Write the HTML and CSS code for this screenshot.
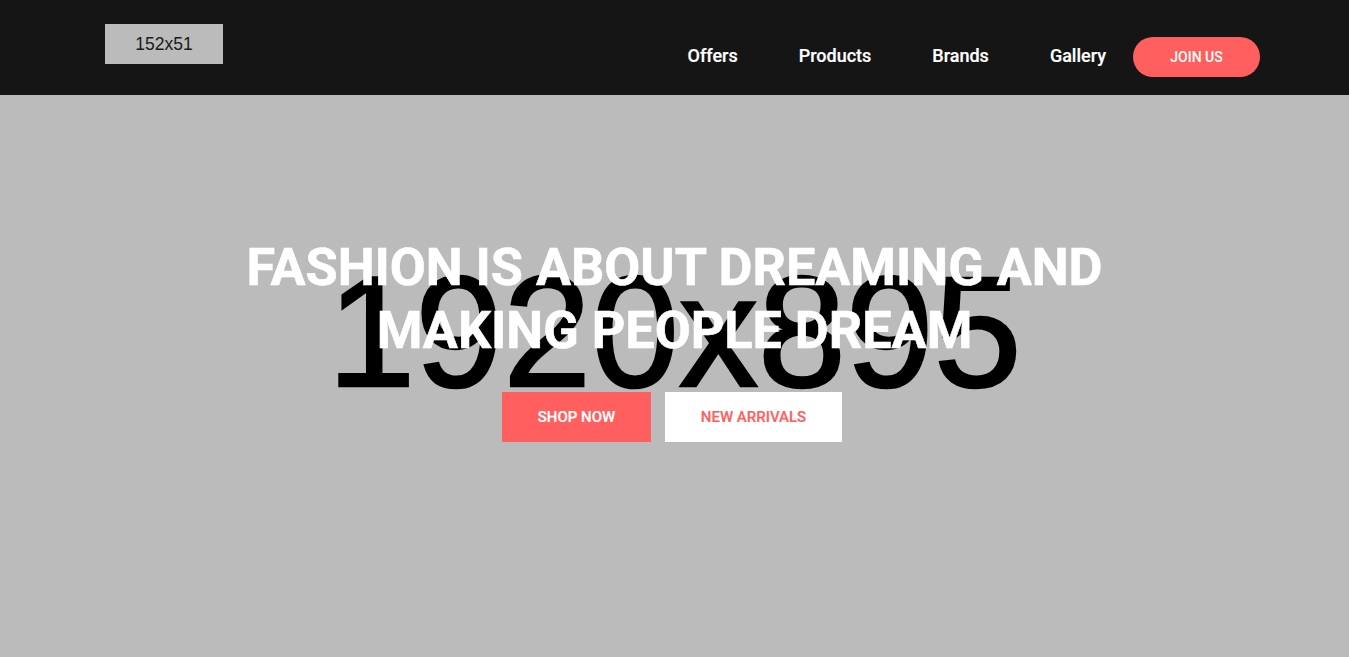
FILE: index.html
```html
<!DOCTYPE html>
<html lang="en">
<head>
<meta charset="utf-8">
<title>Fashion</title>
<link rel="stylesheet" href="styles.css">
</head>
<body>
<header class="site-header">
  <a class="logo" href="#">152x51</a>
  <nav class="main-nav">
    <a class="nav-link" href="#">Offers</a>
    <a class="nav-link" href="#">Products</a>
    <a class="nav-link" href="#">Brands</a>
    <a class="nav-link" href="#">Gallery</a>
    <a class="join-btn" href="#">JOIN US</a>
  </nav>
</header>
<section class="hero">
  <div class="hero-bg" aria-hidden="true">1920x895</div>
  <div class="hero-content">
    <h1 class="hero-title">FASHION IS ABOUT DREAMING AND<br>MAKING PEOPLE DREAM</h1>
    <div class="hero-actions">
      <a class="btn btn-primary" href="#">SHOP NOW</a>
      <a class="btn btn-light" href="#">NEW ARRIVALS</a>
    </div>
  </div>
</section>
</body>
</html>
```
FILE: styles.css
```css
* { box-sizing: border-box; }
html, body { margin: 0; padding: 0; }
body {
  font-family: Roboto, "Liberation Sans", Arial, sans-serif;
  background: #bbbbbb;
  overflow: hidden;
}
a { text-decoration: none; }

.site-header {
  height: 95px;
  background: #151515;
  display: flex;
  align-items: flex-start;
  justify-content: space-between;
  padding: 0 89px 0 105px;
}
.logo {
  margin-top: 24px;
  width: 118px;
  height: 40px;
  background: #bbbbbb;
  color: #1a1a1a;
  font-family: "Liberation Sans", Arial, sans-serif;
  font-size: 17.5px;
  display: flex;
  align-items: center;
  justify-content: center;
}
.main-nav {
  margin-top: 37px;
  height: 40px;
  display: flex;
  align-items: center;
}
.nav-link {
  color: #fff;
  font-size: 18px;
  font-weight: 500;
  margin-left: 61px;
  padding-bottom: 3px;
  -webkit-text-stroke: 0.2px #fff;
}
.nav-link:first-child { margin-left: 0; }
.join-btn {
  margin-left: 27px;
  width: 127px;
  height: 40px;
  border-radius: 20px;
  background: #ff5f5f;
  color: #fff;
  font-size: 14px;
  font-weight: 500;
  display: flex;
  align-items: center;
  justify-content: center;
}

.hero {
  position: relative;
  height: 562px;
  background: #bbbbbb;
}
.hero-bg {
  position: absolute;
  left: 0;
  right: 0;
  top: 157px;
  text-align: center;
  font-family: "Liberation Sans", Arial, sans-serif;
  font-size: 158px;
  line-height: 1;
  color: #000;
  -webkit-text-stroke: 2.5px #000;
}
.hero-content {
  position: relative;
  padding-top: 141px;
  display: flex;
  flex-direction: column;
  align-items: center;
}
.hero-title {
  margin: 0;
  color: #fff;
  font-size: 52.2px;
  font-weight: 700;
  line-height: 63px;
  text-align: center;
  -webkit-text-stroke: 0.6px #fff;
}
.hero-actions {
  margin-top: 30px;
  display: flex;
  gap: 14px;
  padding-right: 5px;
}
.btn {
  height: 50px;
  display: flex;
  align-items: center;
  justify-content: center;
  font-size: 15px;
  font-weight: 500;
  -webkit-text-stroke: 0.2px currentColor;
}
.btn-primary {
  width: 149px;
  background: #ff5f5f;
  color: #fff;
}
.btn-light {
  width: 177px;
  background: #fff;
  color: #ff5f5f;
}
```
